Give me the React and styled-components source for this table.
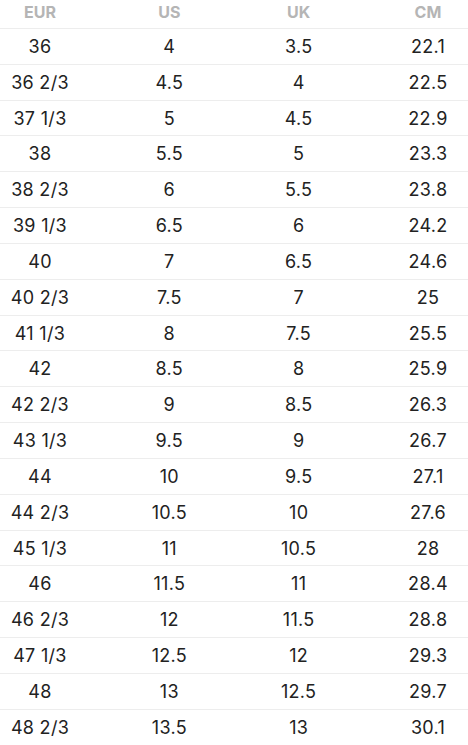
import React from "react";
import styled, { createGlobalStyle } from "styled-components";

const GlobalStyle = createGlobalStyle`
  html, body {
    margin: 0;
    padding: 0;
    background: #ffffff;
  }
`;

const sizes = [
  ["36", "4", "3.5", "22.1"],
  ["36 2/3", "4.5", "4", "22.5"],
  ["37 1/3", "5", "4.5", "22.9"],
  ["38", "5.5", "5", "23.3"],
  ["38 2/3", "6", "5.5", "23.8"],
  ["39 1/3", "6.5", "6", "24.2"],
  ["40", "7", "6.5", "24.6"],
  ["40 2/3", "7.5", "7", "25"],
  ["41 1/3", "8", "7.5", "25.5"],
  ["42", "8.5", "8", "25.9"],
  ["42 2/3", "9", "8.5", "26.3"],
  ["43 1/3", "9.5", "9", "26.7"],
  ["44", "10", "9.5", "27.1"],
  ["44 2/3", "10.5", "10", "27.6"],
  ["45 1/3", "11", "10.5", "28"],
  ["46", "11.5", "11", "28.4"],
  ["46 2/3", "12", "11.5", "28.8"],
  ["47 1/3", "12.5", "12", "29.3"],
  ["48", "13", "12.5", "29.7"],
  ["48 2/3", "13.5", "13", "30.1"],
];

function App() {
  return (
    <Root>
      <GlobalStyle />
      <HeaderRow>
        {["EUR", "US", "UK", "CM"].map((h) => (
          <HeadCell key={h}>{h}</HeadCell>
        ))}
      </HeaderRow>
      {sizes.map((row) => (
        <Row key={row[0]}>
          {row.map((v, i) => (
            <Cell key={i}>{v}</Cell>
          ))}
        </Row>
      ))}
    </Root>
  );
}

const Root = styled.div`
  width: 468px;
  display: flex;
  flex-direction: column;
  font-family: Inter, "Noto Sans", sans-serif;
`;

const HeaderRow = styled.div`
  display: grid;
  grid-template-columns: repeat(4, 80px);
  justify-content: space-between;
  align-items: center;
  height: 29px;
  border-bottom: 1px solid #ededed;
  box-sizing: border-box;
`;

const HeadCell = styled.div`
  text-align: center;
  font-size: 16px;
  font-weight: 700;
  color: #b5b5b5;
  padding-bottom: 5px;
`;

const Row = styled.div`
  display: grid;
  grid-template-columns: repeat(4, 80px);
  justify-content: space-between;
  align-items: center;
  height: 35.84px;
  border-bottom: 1px solid #ededed;
  box-sizing: border-box;
`;

const Cell = styled.div`
  text-align: center;
  font-size: 18px;
  letter-spacing: 0.3px;
  color: #222222;
`;

export default App;
